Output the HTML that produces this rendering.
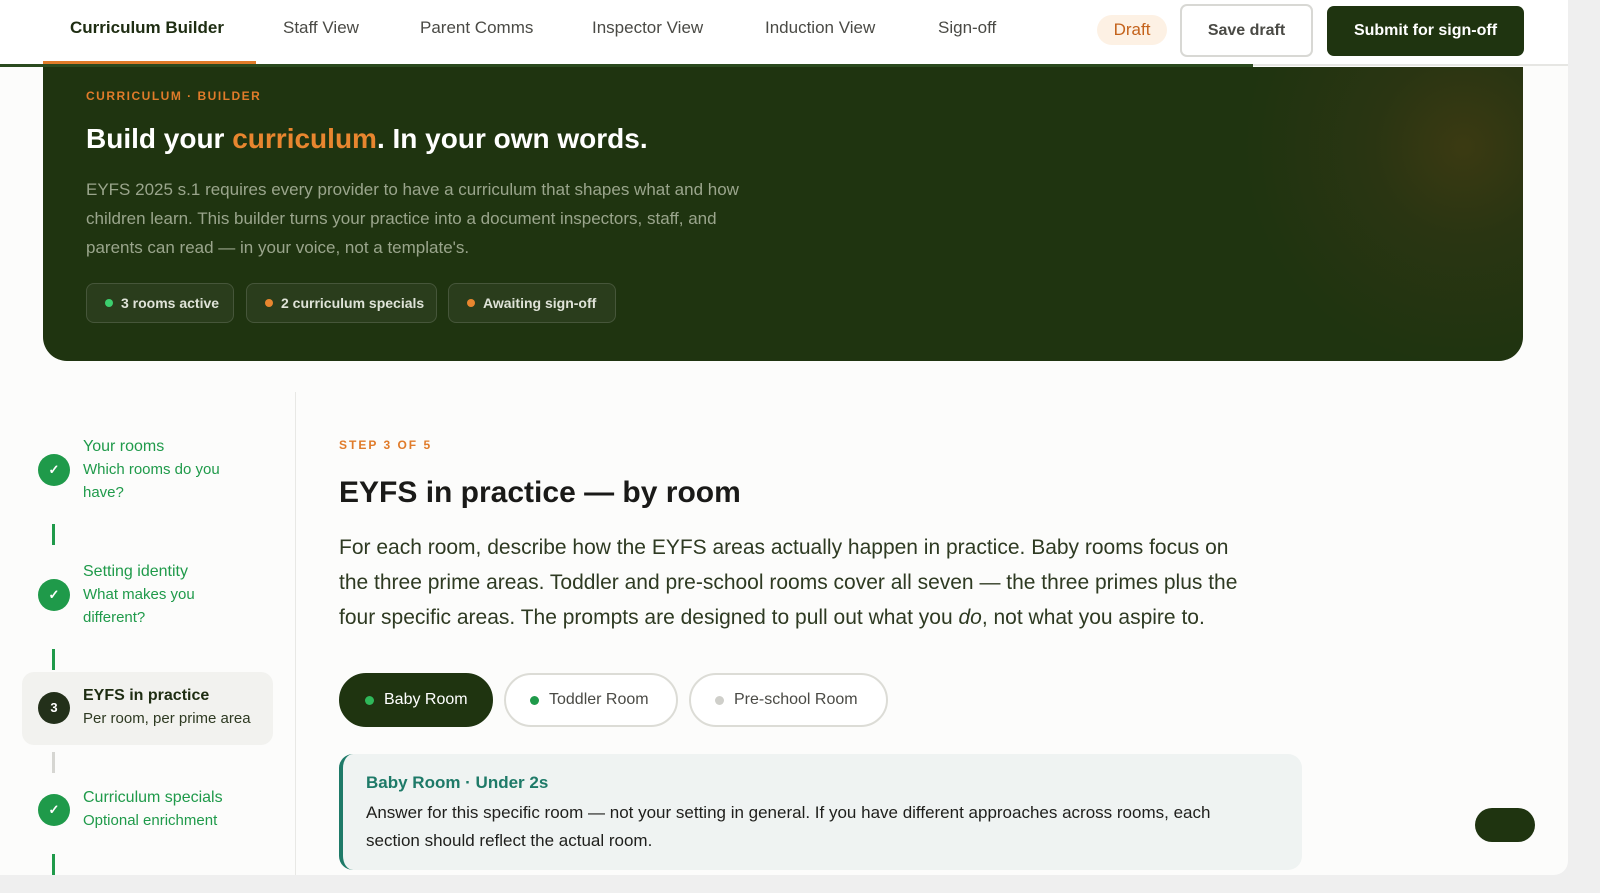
<!DOCTYPE html>
<html><head><meta charset="utf-8"><style>
*{box-sizing:border-box;margin:0;padding:0}
body{width:1600px;height:893px;overflow:hidden;background:#efefef;font-family:"Liberation Sans",sans-serif;position:relative}
.page{position:absolute;left:0;top:0;width:1568px;height:875px;background:#fcfcfb;border-bottom-right-radius:14px;overflow:hidden}
.nav{position:absolute;left:0;top:0;width:1568px;height:66px;background:#fff;border-bottom:2px solid #e6e6e3}
.nav .bar{position:absolute;left:0;top:64px;width:1253px;height:3px;background:#2b4a1f}
.tab{position:absolute;top:18px;font-size:17px;color:#4a4a45}
.tab.act{color:#1e2d12;font-weight:bold}
.uline{position:absolute;left:43px;top:61px;width:213px;height:3px;background:#e07b2a}
.draft{position:absolute;left:1097px;top:15px;width:70px;height:30px;border-radius:15px;background:#fdf1e4;color:#c4621b;font-size:17px;text-align:center;line-height:30px}
.save{position:absolute;left:1180px;top:4px;width:133px;height:53px;border:2px solid #d8d8d4;border-radius:7px;background:#fff;color:#4a4a45;font-weight:bold;font-size:16px;text-align:center;line-height:49px}
.submit{position:absolute;left:1327px;top:6px;width:197px;height:50px;border-radius:7px;background:#1f3410;color:#fff;font-weight:bold;font-size:16px;text-align:center;line-height:50px}
.hero{position:absolute;left:43px;top:67px;width:1480px;height:294px;background:radial-gradient(circle at 1420px 80px,#3b3a12 0,#2a3512 90px,#1f3410 220px);border-radius:0 0 24px 24px}
.eyebrow{position:absolute;left:43px;top:22px;font-size:12px;font-weight:bold;letter-spacing:1.5px;color:#e07b2a}
.h1{position:absolute;left:43px;top:56px;font-size:28px;font-weight:bold;color:#fff}
.h1 span{color:#e8862f}
.lead{position:absolute;left:43px;top:108px;width:680px;font-size:17px;line-height:29px;color:#9aa58c}
.chip{position:absolute;top:216px;height:40px;border:1px solid #46563a;border-radius:8px;background:#2a3d1c;color:#dfe3d8;font-size:14px;font-weight:bold;line-height:38px;padding-left:34px}
.chip:before{content:"";position:absolute;left:18px;top:15px;width:8px;height:8px;border-radius:50%;background:var(--c)}
.side{position:absolute;left:295px;top:392px;width:1px;height:483px;background:#e8e8e5}
.step{position:absolute;left:83px;font-size:15px;line-height:23px;color:#1f9a4a}
.step b{font-weight:normal;font-size:16px}
.circ{position:absolute;left:38px;width:32px;height:32px;border-radius:50%;background:#1f9a4a;color:#fff;text-align:center;line-height:32px;font-size:13px;font-weight:bold}
.vl{position:absolute;left:52px;width:3px;height:21px;background:#1f9a4a}
.cur{position:absolute;left:22px;top:672px;width:251px;height:73px;background:#f2f2ef;border-radius:12px}
.s3{font-size:12px;font-weight:bold;letter-spacing:2px;color:#e07b2a;position:absolute;left:339px;top:438px}
.h2{position:absolute;left:339px;top:476px;font-size:30px;font-weight:bold;color:#1a1a18}
.para{position:absolute;left:339px;top:530px;width:900px;font-size:21px;line-height:35px;color:#2e3a22}
.pill{position:absolute;top:673px;height:54px;border-radius:27px;border:2px solid #dcdcd6;background:#fff;font-size:16px;color:#4a4a45;line-height:50px;padding-left:43px}
.pill:before{content:"";position:absolute;left:24px;top:21px;width:9px;height:9px;border-radius:50%;background:var(--c)}
.note{position:absolute;left:339px;top:754px;width:963px;height:116px;background:#eff3f2;border-left:4px solid #1e7a68;border-radius:14px}
.note .t{position:absolute;left:23px;top:19px;font-size:17px;font-weight:bold;color:#1e7a68}
.note .b{position:absolute;left:23px;top:45px;width:860px;font-size:17px;line-height:28px;color:#1f1f1c}
.fab{position:absolute;left:1475px;top:808px;width:60px;height:34px;border-radius:17px;background:#1f3410}
</style></head><body>
<div class="page">
<div class="nav">
<div class="bar"></div>
<div class="tab act" style="left:70px">Curriculum Builder</div>
<div class="tab" style="left:283px">Staff View</div>
<div class="tab" style="left:420px">Parent Comms</div>
<div class="tab" style="left:592px">Inspector View</div>
<div class="tab" style="left:765px">Induction View</div>
<div class="tab" style="left:938px">Sign-off</div>
<div class="uline"></div>
<div class="draft">Draft</div>
<div class="save">Save draft</div>
<div class="submit">Submit for sign-off</div>
</div>
<div class="hero">
<div class="eyebrow">CURRICULUM · BUILDER</div>
<div class="h1">Build your <span>curriculum</span>. In your own words.</div>
<div class="lead">EYFS 2025 s.1 requires every provider to have a curriculum that shapes what and how children learn. This builder turns your practice into a document inspectors, staff, and parents can read — in your voice, not a template's.</div>
<div class="chip" style="left:43px;width:148px;--c:#3ccf6e">3 rooms active</div>
<div class="chip" style="left:203px;width:191px;--c:#e8862f">2 curriculum specials</div>
<div class="chip" style="left:405px;width:168px;--c:#e8862f">Awaiting sign-off</div>
</div>
<div class="side"></div>
<div class="circ" style="top:454px">✓</div>
<div class="step" style="top:435px"><b>Your rooms</b><br>Which rooms do you<br>have?</div>
<div class="vl" style="top:524px"></div>
<div class="circ" style="top:579px">✓</div>
<div class="step" style="top:560px"><b>Setting identity</b><br>What makes you<br>different?</div>
<div class="vl" style="top:649px"></div>
<div class="cur"></div>
<div class="circ" style="top:692px;background:#23301a">3</div>
<div class="step" style="top:684px;color:#2e3a22"><b style="font-weight:bold;color:#1e2d12">EYFS in practice</b><br>Per room, per prime area</div>
<div class="vl" style="top:752px;background:#d6d6d2"></div>
<div class="circ" style="top:794px">✓</div>
<div class="step" style="top:786px"><b>Curriculum specials</b><br>Optional enrichment</div>
<div class="vl" style="top:854px"></div>
<div class="s3">STEP 3 OF 5</div>
<div class="h2">EYFS in practice — by room</div>
<div class="para">For each room, describe how the EYFS areas actually happen in practice. Baby rooms focus on the three prime areas. Toddler and pre-school rooms cover all seven — the three primes plus the four specific areas. The prompts are designed to pull out what you <i>do</i>, not what you aspire to.</div>
<div class="pill" style="left:339px;width:154px;background:#1f3410;border-color:#1f3410;color:#fff;--c:#2fb85a">Baby Room</div>
<div class="pill" style="left:504px;width:174px;--c:#1f9a4a">Toddler Room</div>
<div class="pill" style="left:689px;width:199px;--c:#cfcfca">Pre-school Room</div>
<div class="note"><div class="t">Baby Room · Under 2s</div><div class="b">Answer for this specific room — not your setting in general. If you have different approaches across rooms, each section should reflect the actual room.</div></div>
<div class="fab"></div>
</div>
</body></html>
